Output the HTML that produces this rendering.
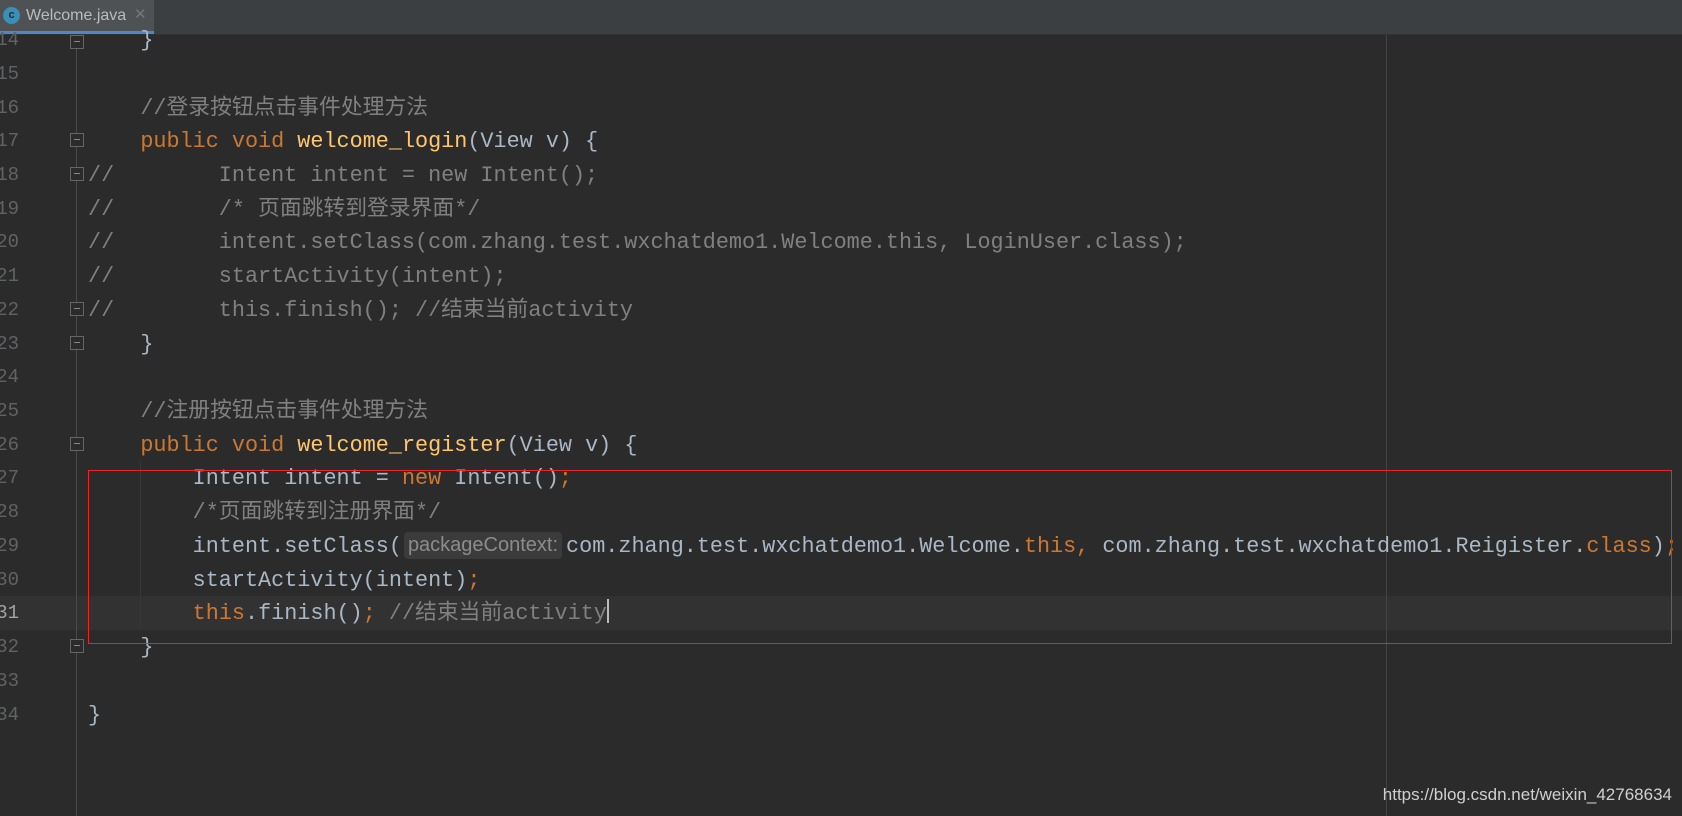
<!DOCTYPE html>
<html><head><meta charset="utf-8"><style>
body{margin:0;width:1682px;height:816px;background:#2b2b2b;overflow:hidden;position:relative;font-family:"Liberation Mono","Noto Sans CJK SC",monospace;}
.tabbar{position:absolute;left:0;top:0;width:1682px;height:34px;background:#3c3f41;border-bottom:1px solid #323232;}
.tab{position:absolute;left:0;top:0;width:154px;height:31px;background:#4e5254;border-bottom:3px solid #4a88c7;font-family:"Liberation Sans",sans-serif;font-size:16px;color:#bbbbbb;}
.tab .ic{position:absolute;left:3px;top:7px;width:17px;height:17px;border-radius:50%;background:#3b8eb8;color:#2b2b2b;font-size:11px;font-weight:bold;text-align:center;line-height:17px;}
.tab .t{position:absolute;left:26px;top:7px;}
.tab .x{position:absolute;left:134px;top:5px;color:#777;font-size:15px;}
.gline{position:absolute;left:76px;top:35px;width:1px;height:781px;background:#4a4a4a;}
.margin{position:absolute;left:1386px;top:35px;width:1px;height:781px;background:#444;}
.cur{position:absolute;left:0;top:596px;width:1682px;height:34px;background:#323232;}
.ln{position:absolute;left:0;width:19px;text-align:right;font-size:19px;color:#606366;line-height:33.74px;overflow:hidden;white-space:nowrap;direction:rtl;}
.ln.c{color:#a4a3a3;}
.code{position:absolute;left:88px;font-size:21.8px;line-height:33.74px;white-space:pre;color:#a9b7c6;}
.k{color:#cc7832}.m{color:#ffc66d}.cm{color:#808080}
.fold{position:absolute;left:70px;width:12px;height:12px;border:1px solid #666;background:#2b2b2b;}
.fold:after{content:"";position:absolute;left:3px;top:5px;width:6px;height:1px;background:#888;}
.hint{display:inline-block;background:#3b3b3b;color:#8c8c8c;font-family:"Liberation Sans",sans-serif;font-size:20px;border-radius:4px;padding:0 4px;line-height:27px;vertical-align:1px;margin:0 4px 0 2px;}
.red{position:absolute;left:88px;top:470px;width:1582px;height:172px;border:1px solid #e8262b;}
.wm{position:absolute;right:10px;top:785px;font-family:"Liberation Sans",sans-serif;font-size:17px;color:#d0d0d0;}
.caret{display:inline-block;width:2px;height:24px;background:#bbbbbb;vertical-align:-4px;}
.guide{position:absolute;left:140px;width:1px;background:#383838;}
</style></head><body>
<div class="tabbar"><div class="tab"><div class="ic">c</div><div class="t">Welcome.java</div><div class="x">✕</div></div></div>
<div class="cur"></div>
<div class="gline"></div>
<div class="margin"></div>
<div class="guide" style="top:461px;height:169px"></div>

<div class="ln" style="top:24px">14</div>
<div class="ln" style="top:58px">15</div>
<div class="ln" style="top:92px">16</div>
<div class="ln" style="top:125px">17</div>
<div class="ln" style="top:159px">18</div>
<div class="ln" style="top:193px">19</div>
<div class="ln" style="top:226px">20</div>
<div class="ln" style="top:260px">21</div>
<div class="ln" style="top:294px">22</div>
<div class="ln" style="top:328px">23</div>
<div class="ln" style="top:361px">24</div>
<div class="ln" style="top:395px">25</div>
<div class="ln" style="top:429px">26</div>
<div class="ln" style="top:462px">27</div>
<div class="ln" style="top:496px">28</div>
<div class="ln" style="top:530px">29</div>
<div class="ln" style="top:564px">30</div>
<div class="ln c" style="top:597px">31</div>
<div class="ln" style="top:631px">32</div>
<div class="ln" style="top:665px">33</div>
<div class="ln" style="top:699px">34</div>

<div class="fold" style="top:35px"></div>
<div class="fold" style="top:133px"></div>
<div class="fold" style="top:167px"></div>
<div class="fold" style="top:302px"></div>
<div class="fold" style="top:336px"></div>
<div class="fold" style="top:437px"></div>
<div class="fold" style="top:639px"></div>

<div class="code" style="top:24px">    }</div>
<div class="code cm" style="top:92px">    //登录按钮点击事件处理方法</div>
<div class="code" style="top:125px">    <span class="k">public void </span><span class="m">welcome_login</span>(View v) {</div>
<div class="code cm" style="top:159px">//        Intent intent = new Intent();</div>
<div class="code cm" style="top:193px">//        /* 页面跳转到登录界面*/</div>
<div class="code cm" style="top:226px">//        intent.setClass(com.zhang.test.wxchatdemo1.Welcome.this, LoginUser.class);</div>
<div class="code cm" style="top:260px">//        startActivity(intent);</div>
<div class="code cm" style="top:294px">//        this.finish(); //结束当前activity</div>
<div class="code" style="top:328px">    }</div>
<div class="code cm" style="top:395px">    //注册按钮点击事件处理方法</div>
<div class="code" style="top:429px">    <span class="k">public void </span><span class="m">welcome_register</span>(View v) {</div>
<div class="code" style="top:462px">        Intent intent = <span class="k">new </span>Intent()<span class="k">;</span></div>
<div class="code cm" style="top:496px">        /*页面跳转到注册界面*/</div>
<div class="code" style="top:530px">        intent.setClass(<span class="hint">packageContext:</span>com.zhang.test.wxchatdemo1.Welcome.<span class="k">this, </span>com.zhang.test.wxchatdemo1.Reigister.<span class="k">class</span>)<span class="k">;</span></div>
<div class="code" style="top:564px">        startActivity(intent)<span class="k">;</span></div>
<div class="code" style="top:597px">        <span class="k">this</span>.finish()<span class="k">; </span><span class="cm">//结束当前activity</span><span class="caret"></span></div>
<div class="code" style="top:631px">    }</div>
<div class="code" style="top:699px">}</div>

<div class="red"></div>
<div class="wm">https://blog.csdn.net/weixin_42768634</div>
</body></html>
